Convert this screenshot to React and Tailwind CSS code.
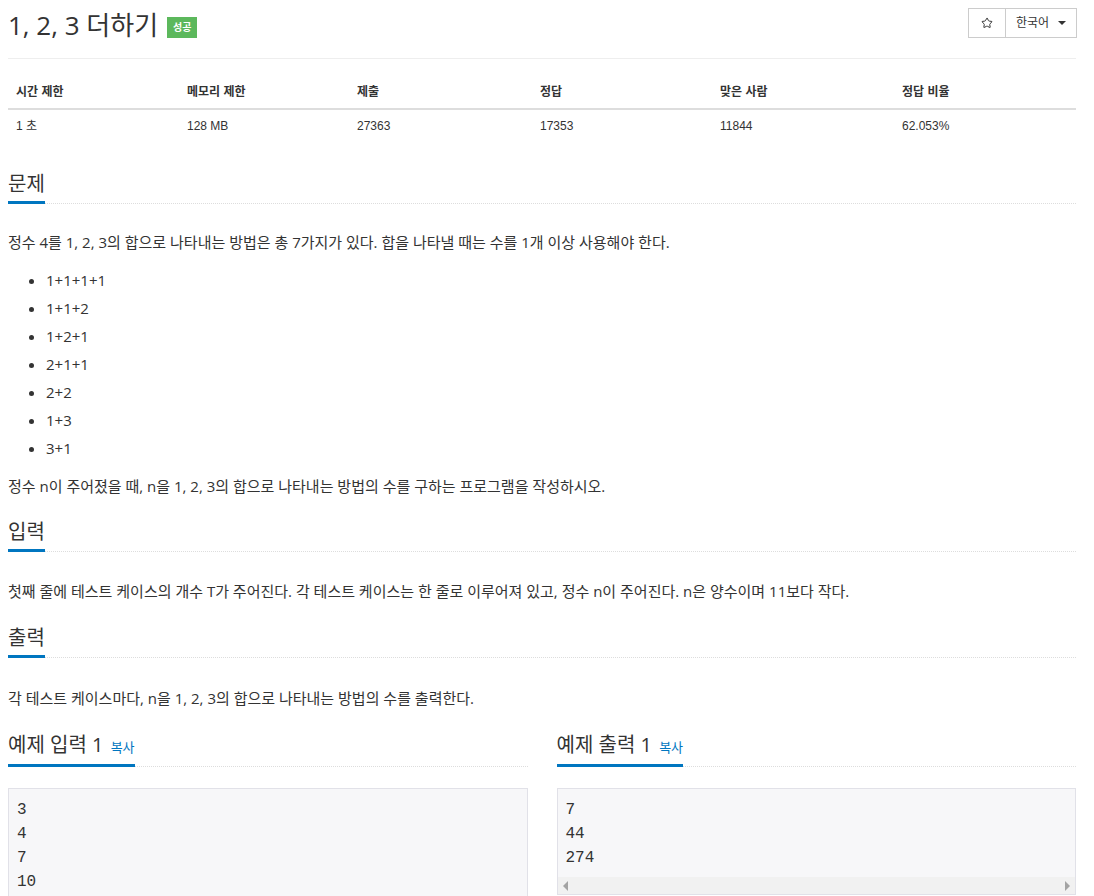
import { Star } from 'lucide-react';

const stats = [
  { label: '시간 제한', value: '1 초', w: 'w-[171px]' },
  { label: '메모리 제한', value: '128 MB', w: 'w-[170px]' },
  { label: '제출', value: '27363', w: 'w-[183px]' },
  { label: '정답', value: '17353', w: 'w-[180px]' },
  { label: '맞은 사람', value: '11844', w: 'w-[182px]' },
  { label: '정답 비율', value: '62.053%', w: 'w-[182px]' },
];

const sums = ['1+1+1+1', '1+1+2', '1+2+1', '2+1+1', '2+2', '1+3', '3+1'];

const Headline = ({ children, className = '' }) => (
  <div className={`border-b border-dotted border-[#ddd] ${className}`}>
    <h2 className="inline-block text-[20px] leading-[28px] font-normal text-[#333] pb-[3px] border-b-[3px] border-[#0076c0] -mb-px">
      {children}
    </h2>
  </div>
);

const SampleBox = ({ title, lines, scroll }) => (
  <div>
    <Headline>
      {title} <span className="text-[13px] text-[#0076c0] ml-[2px]">복사</span>
    </Headline>
    <div className="mt-[21px] border border-[#e1e1e8] bg-[#f7f7f9]">
      <pre className={`font-['Liberation_Mono',monospace] text-[16px] leading-[24px] text-[#333] px-[8px] pt-[9px] ${scroll ? 'pb-[7px]' : 'pb-[9px]'}`}>
        {lines.join('\n')}
      </pre>
      {scroll && (
        <div className="h-[17px] bg-[#f1f1f1] flex items-center justify-between px-[5px]">
          <span className="w-0 h-0 border-y-[5px] border-y-transparent border-r-[5px] border-r-[#a3a3a3]" />
          <span className="w-0 h-0 border-y-[5px] border-y-transparent border-l-[5px] border-l-[#a3a3a3]" />
        </div>
      )}
    </div>
  </div>
);

const App = () => {
  return (
    <div className="pl-[8px] pr-[18px] bg-white min-h-screen text-[15px] text-[#333] font-['Open_Sans','Noto_Sans_CJK_KR',sans-serif]">
      {/* header */}
      <div className="flex items-start justify-between border-b border-[#eee] pb-[8px]">
        <div className="flex items-center h-[50px]">
          <h1 className="text-[26px] leading-[50px] font-normal text-[#333]">1, 2, 3 더하기</h1>
          <span className="ml-[9px] mt-[4px] bg-[#5cb85c] text-white text-[10px] font-bold h-[21px] px-[6px] flex items-center">성공</span>
        </div>
        <div className="mt-[8px] -mr-px flex h-[30px] border border-[#ccc] text-[12px]">
          <button className="w-[37px] flex items-center justify-center border-r border-[#ccc]">
            <Star size={12} strokeWidth={2} className="text-[#333]" />
          </button>
          <button className="w-[70px] flex items-center justify-center gap-[9px]">
            한국어
            <span className="w-0 h-0 border-x-[4px] border-x-transparent border-t-[4px] border-t-[#333]" />
          </button>
        </div>
      </div>

      {/* stats */}
      <table className="mt-[17px] w-full text-[12px] font-['Liberation_Sans','Noto_Sans_CJK_KR',sans-serif]">
        <thead>
          <tr className="border-b-2 border-[#ddd]">
            {stats.map(s => (
              <th key={s.label} className={`${s.w} text-left font-bold px-[8px] h-[33px]`}>{s.label}</th>
            ))}
          </tr>
        </thead>
        <tbody>
          <tr>
            {stats.map(s => (
              <td key={s.label} className="px-[8px] h-[33px]">{s.value}</td>
            ))}
          </tr>
        </tbody>
      </table>

      {/* problem */}
      <Headline className="mt-[28px]">문제</Headline>
      <p className="mt-[28px] leading-[20px]">
        정수 4를 1, 2, 3의 합으로 나타내는 방법은 총 7가지가 있다. 합을 나타낼 때는 수를 1개 이상 사용해야 한다.
      </p>
      <ul className="mt-[14px] list-disc pl-[38px] leading-[28px]">
        {sums.map(s => <li key={s}>{s}</li>)}
      </ul>
      <p className="mt-[14px] leading-[20px]">
        정수 n이 주어졌을 때, n을 1, 2, 3의 합으로 나타내는 방법의 수를 구하는 프로그램을 작성하시오.
      </p>

      <Headline className="mt-[22px]">입력</Headline>
      <p className="mt-[29px] leading-[20px]">
        첫째 줄에 테스트 케이스의 개수 T가 주어진다. 각 테스트 케이스는 한 줄로 이루어져 있고, 정수 n이 주어진다. n은 양수이며 11보다 작다.
      </p>

      <Headline className="mt-[23px]">출력</Headline>
      <p className="mt-[30px] leading-[20px]">
        각 테스트 케이스마다, n을 1, 2, 3의 합으로 나타내는 방법의 수를 출력한다.
      </p>

      {/* samples */}
      <div className="mt-[23px] grid grid-cols-2 gap-[29px]">
        <SampleBox title="예제 입력 1" lines={['3', '4', '7', '10']} />
        <SampleBox title="예제 출력 1" lines={['7', '44', '274']} scroll />
      </div>
    </div>
  );
};

export default App;
